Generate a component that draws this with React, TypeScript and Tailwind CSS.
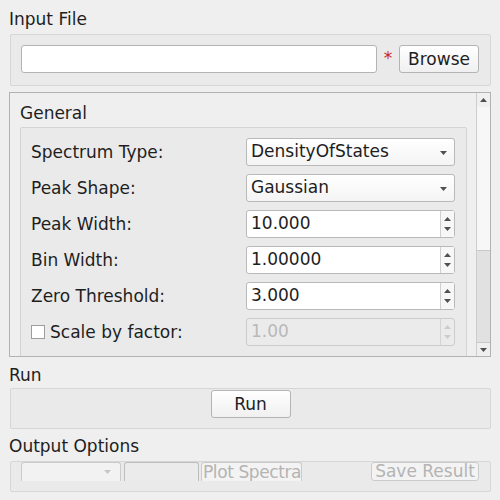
import React from "react";

function Caret({ dir = "down", color = "#505050" }: { dir?: "up" | "down"; color?: string }) {
  return (
    <svg width="7" height="4" viewBox="0 0 7 4" className="block">
      {dir === "down" ? (
        <polygon points="0,0 7,0 3.5,4" fill={color} />
      ) : (
        <polygon points="0,4 7,4 3.5,0" fill={color} />
      )}
    </svg>
  );
}

function Combo({ value }: { value: string }) {
  return (
    <div className="h-[28px] w-[209px] flex items-center justify-between rounded-[3px] border border-[#b9b9b9] bg-gradient-to-b from-white to-[#f4f4f4] pl-[4px] pr-[7px]">
      <span>{value}</span>
      <div className="mt-[1px]">
        <Caret />
      </div>
    </div>
  );
}

function Spin({ value, disabled = false }: { value: string; disabled?: boolean }) {
  return (
    <div
      className={
        disabled
          ? "h-[28px] w-[209px] flex rounded-[3px] border border-[#cbcbcb] bg-[#ebebeb] text-[#b9b9b9]"
          : "h-[28px] w-[209px] flex rounded-[3px] border border-[#b9b9b9] bg-white"
      }
    >
      <div className="flex-1 flex items-center pl-[4px]">{value}</div>
      <div
        className={
          disabled
            ? "w-[14px] flex flex-col items-center justify-center gap-[6px] border-l border-[#d4d4d4]"
            : "w-[14px] flex flex-col items-center justify-center gap-[6px] border-l border-[#cfcfcf] bg-[#f7f7f7]"
        }
      >
        <Caret dir="up" color={disabled ? "#cccccc" : "#505050"} />
        <Caret color={disabled ? "#cccccc" : "#505050"} />
      </div>
    </div>
  );
}

function Row({ label, children }: { label: React.ReactNode; children: React.ReactNode }) {
  return (
    <div className="h-[28px] flex items-center">
      <div className="flex-1 flex items-center leading-[20px]">{label}</div>
      {children}
    </div>
  );
}

export default function App() {
  return (
    <div className="w-[500px] h-[500px] overflow-hidden bg-[#efefef] text-[17px] text-[#1e1e1e] font-['DejaVu_Sans',sans-serif] flex flex-col">
      <div className="ml-[9px] mt-[9px] leading-[20px]">Input File</div>
      <div className="ml-[10px] mt-[5px] w-[481px] h-[52px] rounded-[2px] border border-[#d6d6d6] bg-[#eaeaea] pl-[10px] pt-[10px] flex items-start">
        <div className="h-[28px] w-[356px] rounded-[3px] border border-[#b4b4b4] bg-white" />
        <div className="w-[22px] h-[28px] flex items-center justify-center text-[#cc1f1f] text-[17px]">*</div>
        <button className="h-[28px] w-[80px] rounded-[3px] border border-[#b4b4b4] bg-gradient-to-b from-white to-[#f0f0f0] leading-[20px]">
          Browse
        </button>
      </div>

      <div className="ml-[9px] mt-[6px] w-[482px] h-[265px] border border-[#b2b2b2] flex">
        <div className="flex-1 overflow-hidden">
          <div className="ml-[10px] mt-[10px] leading-[20px]">General</div>
          <div className="ml-[10px] mr-[9px] mt-[4px] h-[240px] rounded-[2px] border border-[#d4d4d4] bg-[#eaeaea] pl-[10px] pr-[11px] pt-[10px] flex flex-col gap-[8px]">
            <Row label="Spectrum Type:">
              <Combo value="DensityOfStates" />
            </Row>
            <Row label="Peak Shape:">
              <Combo value="Gaussian" />
            </Row>
            <Row label="Peak Width:">
              <Spin value="10.000" />
            </Row>
            <Row label="Bin Width:">
              <Spin value="1.00000" />
            </Row>
            <Row label="Zero Threshold:">
              <Spin value="3.000" />
            </Row>
            <Row
              label={
                <>
                  <span className="w-[14px] h-[14px] border border-[#9d9d9d] bg-white mr-[5px]" />
                  <span>Scale by factor:</span>
                </>
              }
            >
              <Spin value="1.00" disabled />
            </Row>
          </div>
        </div>
        <div className="w-[14px] border-l border-[#cdcdcd] flex flex-col">
          <div className="h-[14px] flex items-center justify-center bg-[#f0f0f0]">
            <Caret dir="up" />
          </div>
          <div className="h-[144px] bg-[#f7f7f7] border-b border-[#c9c9c9]" />
          <div className="flex-1 bg-[#e1e1e1]" />
          <div className="h-[14px] flex items-center justify-center bg-[#efefef] border-t border-[#c9c9c9]">
            <Caret />
          </div>
        </div>
      </div>

      <div className="ml-[9px] mt-[8px] leading-[20px]">Run</div>
      <div className="ml-[10px] mt-[3px] w-[481px] h-[41px] rounded-[2px] border border-[#d6d6d6] bg-[#eaeaea] pt-[1px] flex justify-center">
        <button className="h-[28px] w-[80px] rounded-[3px] border border-[#b4b4b4] bg-gradient-to-b from-white to-[#f0f0f0] leading-[20px]">
          Run
        </button>
      </div>

      <div className="ml-[9px] mt-[7px] leading-[20px]">Output Options</div>
      <div className="ml-[10px] mt-[5px] w-[481px] h-[31px] rounded-[2px] border border-[#d6d6d6] bg-[#eaeaea] pl-[10px] pr-[11px] flex items-start text-[#b4b4b4]">
        <div className="h-[19px] w-[100px] rounded-t-[3px] border border-b-0 border-[#cbcbcb] bg-[#f2f2f2] flex justify-end pr-[9px] pt-[7px]">
          <Caret color="#c6c6c6" />
        </div>
        <div className="ml-[3px] h-[19px] w-[75px] rounded-t-[3px] border border-b-0 border-[#bdbdbd] bg-[#ebebeb]" />
        <div className="ml-[2px] h-[19px] w-[101px] overflow-hidden rounded-t-[3px] border border-b-0 border-[#cbcbcb] bg-[#f3f3f3] pl-[1px] leading-[18px] tracking-[-0.4px] whitespace-nowrap">
          Plot Spectra
        </div>
        <div className="flex-1" />
        <div className="h-[19px] w-[108px] rounded-[3px] border border-[#cbcbcb] bg-[#f3f3f3] leading-[17px] text-center whitespace-nowrap">
          Save Result
        </div>
      </div>
    </div>
  );
}
